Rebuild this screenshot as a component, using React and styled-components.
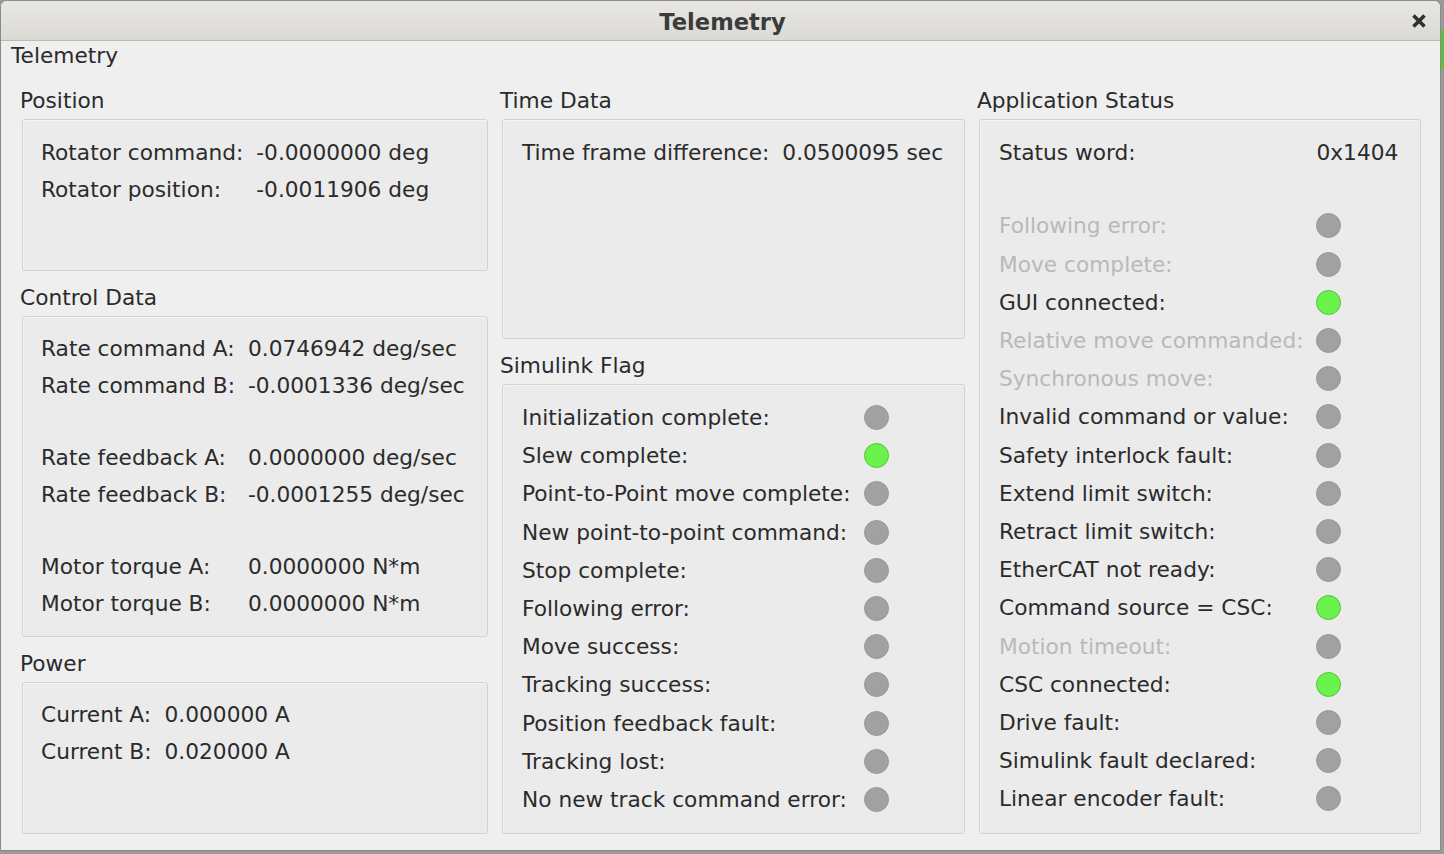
import React from "react";
import styled, { createGlobalStyle } from "styled-components";

const Global = createGlobalStyle`
  html, body { margin: 0; padding: 0; }
  body {
    width: 1444px; height: 854px; overflow: hidden;
    background: #9a9a9a;
    font-family: "DejaVu Sans", "Noto Sans", sans-serif;
  }
`;

const Desktop = styled.div`
  position: relative;
  width: 1444px;
  height: 854px;
`;

const BehindStrip = styled.div`
  position: absolute;
  left: 1441px;
  top: 30px;
  width: 3px;
  height: 40px;
  background: #5fbf3f;
`;

const Window = styled.div`
  width: 1439px;
  height: 849px;
  border: 1px solid #8a8a8a;
  border-radius: 7px 7px 0 0;
  background: #efefef;
  display: flex;
  flex-direction: column;
  overflow: hidden;
`;

const TitleBar = styled.div`
  height: 39px;
  flex: none;
  background: linear-gradient(#e9e7e4, #dbd9d5);
  border-bottom: 1px solid #bdbab5;
  display: flex;
  align-items: center;
  justify-content: center;
  position: relative;
`;

const TitleText = styled.div`
  font-family: "DejaVu Sans", sans-serif;
  font-weight: bold;
  font-size: 22.6px;
  color: #3b3b3b;
  margin: 2px 0 0 4px;
`;

const CloseBtn = styled.div`
  position: absolute;
  right: 13px;
  top: 12px;
  width: 16px;
  height: 16px;
  display: flex;
`;

const Body = styled.div`
  flex: 1;
  display: flex;
  flex-direction: column;
`;

const DockLabel = styled.div`
  font-size: 21.7px;
  line-height: 26px;
  color: #2b2b2b;
  padding: 2px 0 0 10px;
  height: 26px;
`;

const Columns = styled.div`
  display: grid;
  grid-template-columns: 466px 463px 442px;
  column-gap: 14px;
  padding-left: 21px;
  margin-top: 19px;
  height: 746px;
`;

const Column = styled.div`
  display: flex;
  flex-direction: column;
  min-height: 0;
`;

const GroupTitle = styled.div`
  font-size: 21.7px;
  line-height: 26px;
  height: 26px;
  color: #2b2b2b;
  margin: ${(p) => (p.$first ? "0" : "14px")} 0 5px -2px;
  white-space: nowrap;
`;

const Box = styled.div`
  box-sizing: border-box;
  border: 1px solid #d2d2d2;
  border-radius: 3px;
  background: #ebebeb;
  box-shadow: inset 1px 1px 0 #f4f4f4;
  padding: ${(p) => p.$pt || 13}px 18px 0 ${(p) => p.$pl || 18}px;
  ${(p) => (p.$h ? `height: ${p.$h}px; flex: none;` : "flex: 1;")}
`;

const Grid = styled.div`
  display: grid;
  grid-template-columns: auto auto;
  justify-content: start;
  column-gap: 13px;
`;

const Cell = styled.div`
  height: ${(p) => p.$rh || 37}px;
  display: flex;
  align-items: center;
  font-size: 21.7px;
  color: ${(p) => (p.$dim ? "#b9b9b9" : "#2b2b2b")};
  white-space: nowrap;
`;

const Spacer = styled.div`
  grid-column: 1 / span 2;
  height: ${(p) => p.$h}px;
`;

const Led = styled.span`
  display: inline-block;
  box-sizing: border-box;
  width: 25px;
  height: 25px;
  border-radius: 50%;
  background: ${(p) => (p.$on ? "#6af34c" : "#a1a1a4")};
  border: 1px solid ${(p) => (p.$on ? "#55c23b" : "#98989b")};
`;

const ValueRow = ({ label, value, rh }) => (
  <>
    <Cell $rh={rh}>{label}</Cell>
    <Cell $rh={rh}>{value}</Cell>
  </>
);

const LedRow = ({ label, on, dim }) => (
  <>
    <Cell $rh={38.2} $dim={dim}>{label}</Cell>
    <Cell $rh={38.2}>
      <Led $on={on} />
    </Cell>
  </>
);

const simulink = [
  ["Initialization complete:", false],
  ["Slew complete:", true],
  ["Point-to-Point move complete:", false],
  ["New point-to-point command:", false],
  ["Stop complete:", false],
  ["Following error:", false],
  ["Move success:", false],
  ["Tracking success:", false],
  ["Position feedback fault:", false],
  ["Tracking lost:", false],
  ["No new track command error:", false],
];

const appStatus = [
  ["Following error:", false, true],
  ["Move complete:", false, true],
  ["GUI connected:", true, false],
  ["Relative move commanded:", false, true],
  ["Synchronous move:", false, true],
  ["Invalid command or value:", false, false],
  ["Safety interlock fault:", false, false],
  ["Extend limit switch:", false, false],
  ["Retract limit switch:", false, false],
  ["EtherCAT not ready:", false, false],
  ["Command source = CSC:", true, false],
  ["Motion timeout:", false, true],
  ["CSC connected:", true, false],
  ["Drive fault:", false, false],
  ["Simulink fault declared:", false, false],
  ["Linear encoder fault:", false, false],
];

export default function App() {
  return (
    <>
      <Global />
      <Desktop>
        <BehindStrip />
        <Window>
          <TitleBar>
            <TitleText>Telemetry</TitleText>
            <CloseBtn>
              <svg width="16" height="16" viewBox="0 0 16 16">
                <path d="M2.5 2.5 L13.5 13.5 M13.5 2.5 L2.5 13.5" stroke="#2f2f2f" strokeWidth="3.6" strokeLinecap="butt" />
              </svg>
            </CloseBtn>
          </TitleBar>
          <Body>
            <DockLabel>Telemetry</DockLabel>
            <Columns>
              <Column>
                <GroupTitle $first>Position</GroupTitle>
                <Box $h={152} $pt={14}>
                  <Grid>
                    <ValueRow label="Rotator command:" value="-0.0000000 deg" />
                    <ValueRow label="Rotator position:" value="-0.0011906 deg" />
                  </Grid>
                </Box>
                <GroupTitle>Control Data</GroupTitle>
                <Box $h={321} $pt={12.5}>
                  <Grid>
                    <ValueRow label="Rate command A:" value="0.0746942 deg/sec" />
                    <ValueRow label="Rate command B:" value="-0.0001336 deg/sec" />
                    <Spacer $h={35} />
                    <ValueRow label="Rate feedback A:" value="0.0000000 deg/sec" />
                    <ValueRow label="Rate feedback B:" value="-0.0001255 deg/sec" />
                    <Spacer $h={35} />
                    <ValueRow label="Motor torque A:" value="0.0000000 N*m" />
                    <ValueRow label="Motor torque B:" value="0.0000000 N*m" />
                  </Grid>
                </Box>
                <GroupTitle>Power</GroupTitle>
                <Box $pt={12.5}>
                  <Grid>
                    <ValueRow label="Current A:" value="0.000000 A" />
                    <ValueRow label="Current B:" value="0.020000 A" />
                  </Grid>
                </Box>
              </Column>
              <Column>
                <GroupTitle $first>Time Data</GroupTitle>
                <Box $h={220} $pt={14} $pl={19}>
                  <Grid>
                    <ValueRow label="Time frame difference:" value="0.0500095 sec" />
                  </Grid>
                </Box>
                <GroupTitle>Simulink Flag</GroupTitle>
                <Box $pt={13.5} $pl={19}>
                  <Grid>
                    {simulink.map(([l, on]) => (
                      <LedRow key={l} label={l} on={on} />
                    ))}
                  </Grid>
                </Box>
              </Column>
              <Column>
                <GroupTitle $first>Application Status</GroupTitle>
                <Box $pt={13.5} $pl={19}>
                  <Grid>
                    <ValueRow label="Status word:" value="0x1404" />
                    <Spacer $h={36.4} />
                    {appStatus.map(([l, on, dim]) => (
                      <LedRow key={l} label={l} on={on} dim={dim} />
                    ))}
                  </Grid>
                </Box>
              </Column>
            </Columns>
          </Body>
        </Window>
      </Desktop>
    </>
  );
}
